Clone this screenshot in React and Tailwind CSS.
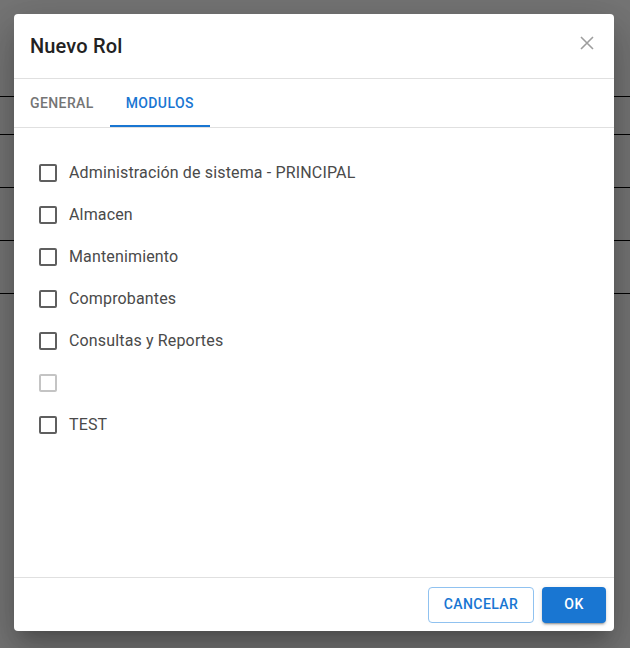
import React from "react";

const items = [
  { label: "Administración de sistema - PRINCIPAL" },
  { label: "Almacen" },
  { label: "Mantenimiento" },
  { label: "Comprobantes" },
  { label: "Consultas y Reportes" },
  { label: "", disabled: true },
  { label: "TEST" },
];

export default function App() {
  return (
    <div
      className="relative h-[648px] w-[630px] overflow-hidden bg-[#757575]"
      style={{ fontFamily: "Roboto, 'Noto Sans', sans-serif" }}
    >
      {/* background table lines */}
      <div className="pt-[96px]">
        <div className="h-[38px] border-t border-black" />
        <div className="h-[53px] border-t border-black" />
        <div className="h-[53px] border-t border-black" />
        <div className="h-[53px] border-t border-black" />
        <div className="h-[53px] border-t border-black" />
      </div>

      {/* dialog */}
      <div className="absolute left-[14px] top-[14px] flex h-[617px] w-[600px] flex-col rounded-[4px] bg-white shadow-[0_11px_15px_-7px_rgba(0,0,0,0.2),0_24px_38px_3px_rgba(0,0,0,0.14),0_9px_46px_8px_rgba(0,0,0,0.12)]">
        {/* header */}
        <div className="flex h-[65px] items-center justify-between border-b border-[#e0e0e0] pl-[16px] pr-[20px]">
          <div className="text-[20px] font-medium text-[#222] tracking-[0.15px]">Nuevo Rol</div>
          <svg width="14" height="14" viewBox="0 0 14 14" className="mt-[-6px]">
            <path d="M1 1 L13 13 M13 1 L1 13" stroke="#9e9e9e" strokeWidth="1.6" />
          </svg>
        </div>

        {/* tabs */}
        <div className="flex h-[49px] border-b border-[#e0e0e0]">
          <div className="flex h-full items-center px-[16px] text-[14px] font-medium uppercase tracking-[0.4px] text-[#757575]">
            General
          </div>
          <div className="relative flex h-full w-[100px] items-center justify-center text-[14px] font-medium uppercase tracking-[0.4px] text-[#1976d2]">
            Modulos
            <div className="absolute bottom-0 left-0 right-0 h-[2px] bg-[#1976d2]" />
          </div>
        </div>

        {/* content */}
        <div className="flex-1 pt-[24px]">
          {items.map((it, i) => (
            <div key={i} className="flex h-[42px] items-center pl-[25px]">
              <div
                className={
                  it.disabled
                    ? "h-[18px] w-[18px] rounded-[2px] border-2 border-[#c4c4c4]"
                    : "h-[18px] w-[18px] rounded-[2px] border-2 border-[#5f5f5f]"
                }
              />
              <span className="ml-[12px] text-[16px] tracking-[0.15px] text-[#4a4a4a]">{it.label}</span>
            </div>
          ))}
        </div>

        {/* footer */}
        <div className="flex h-[54px] items-center justify-end gap-[8px] border-t border-[#e0e0e0] px-[8px]">
          <button className="h-[36px] w-[106px] rounded-[4px] border border-[#90c2f0] text-[14px] font-medium uppercase tracking-[0.4px] text-[#1976d2]">
            Cancelar
          </button>
          <button className="h-[36px] w-[64px] rounded-[4px] bg-[#1976d2] text-[14px] font-medium uppercase tracking-[0.4px] text-white shadow-[0_3px_1px_-2px_rgba(0,0,0,0.2),0_2px_2px_0_rgba(0,0,0,0.14),0_1px_5px_0_rgba(0,0,0,0.12)]">
            OK
          </button>
        </div>
      </div>
    </div>
  );
}
